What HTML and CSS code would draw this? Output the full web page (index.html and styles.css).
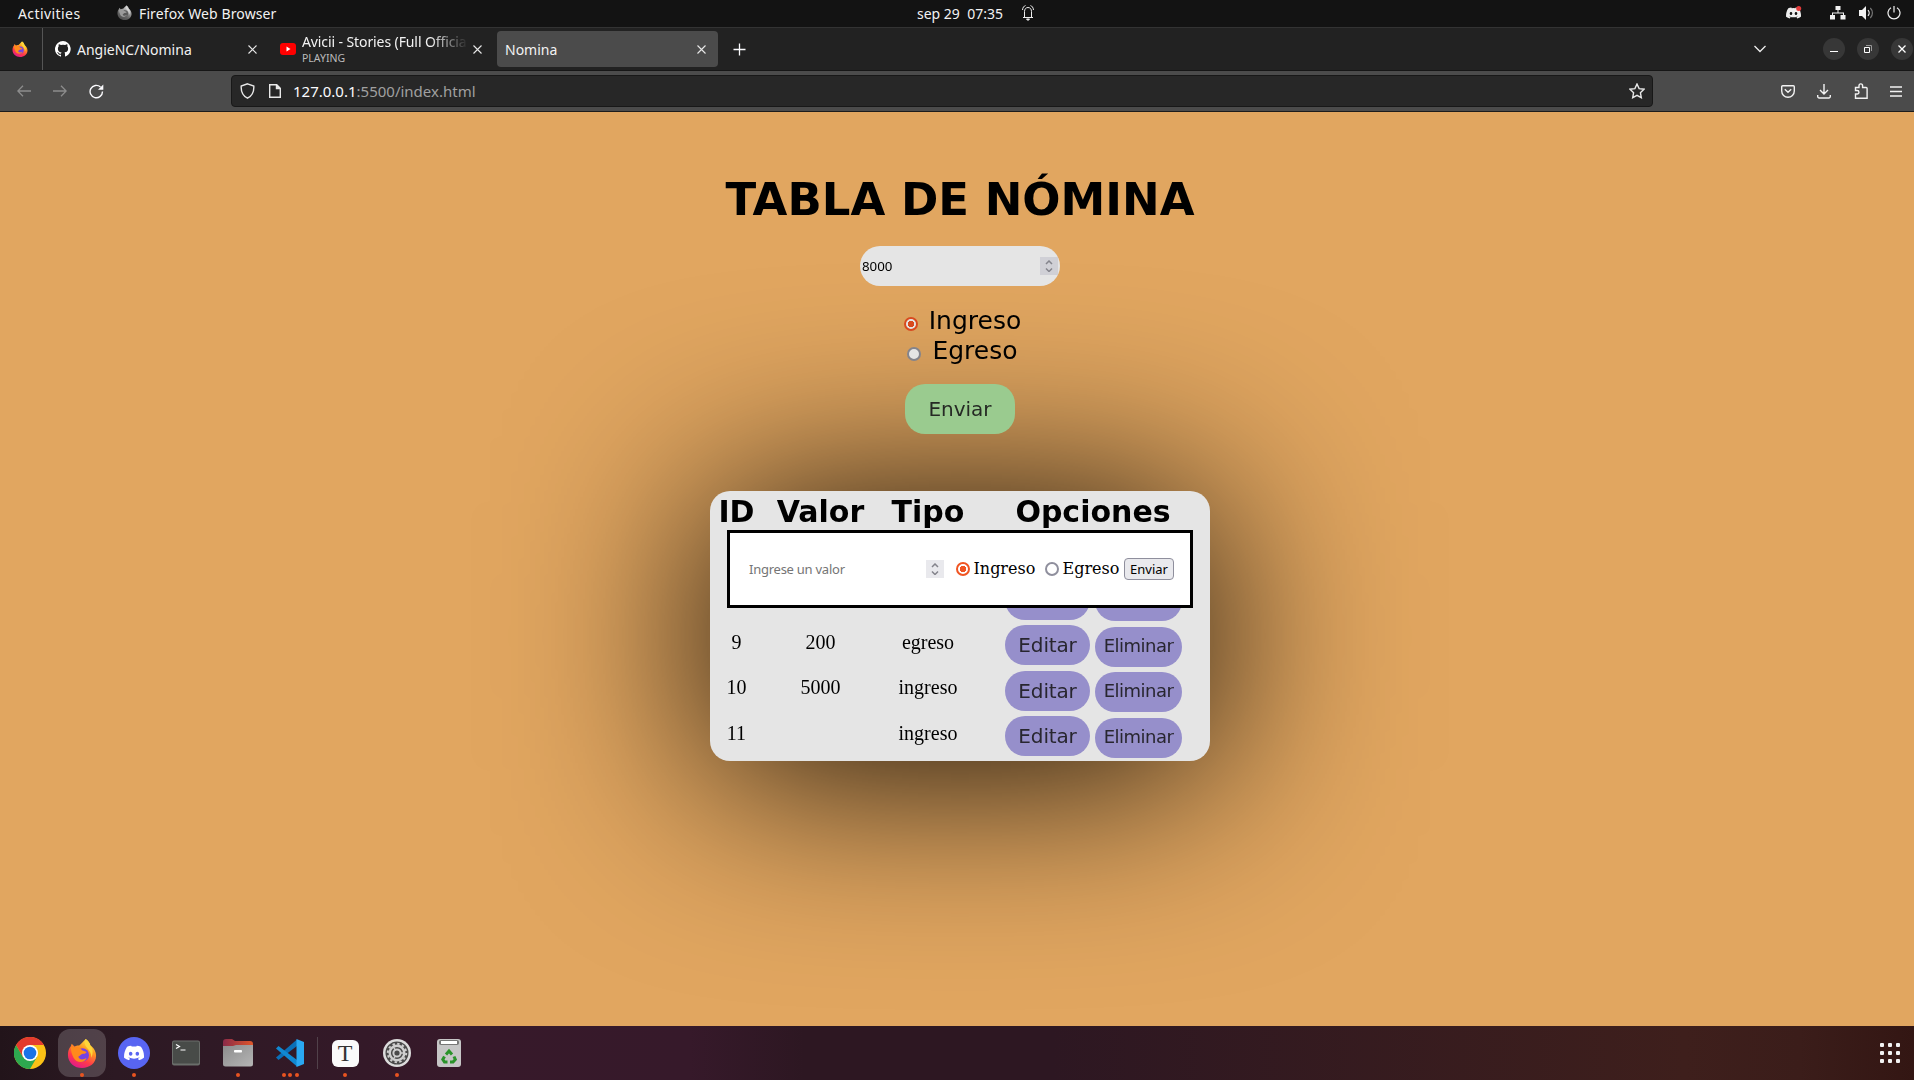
FILE: index.html
```html
<!DOCTYPE html>
<html lang="es">
<head>
<meta charset="utf-8">
<title>Nomina</title>
<link rel="stylesheet" href="styles.css">
</head>
<body>
<svg class="defs" width="0" height="0">
  <defs>
    <linearGradient id="fox" x1=".8" y1="0" x2=".3" y2="1"><stop offset="0" stop-color="#fff44f"/><stop offset=".35" stop-color="#ff9a1f"/><stop offset=".7" stop-color="#ff3a4a"/><stop offset="1" stop-color="#e0188c"/></linearGradient>
    <linearGradient id="fold" x1="0" x2="1"><stop offset="0" stop-color="#8a2a48"/><stop offset="1" stop-color="#e0562a"/></linearGradient>
    <linearGradient id="grey" x1="0" y1="0" x2="1" y2="1"><stop offset="0" stop-color="#8c8c8c"/><stop offset="1" stop-color="#b5b5b5"/></linearGradient>
    <symbol id="firefox" viewBox="0 0 32 32">
      <path fill="url(#fox)" d="M20 1c3 2 4 4 5 7 3 2 6 6 6 11 0 8-7 13-15 13S1 26 1 18c0-4 1-7 3-9l1-3 3 3c2-1 4-1 5-1 2-2 4-4 7-7z"/>
      <circle cx="16.500" cy="18" r="7" fill="#7542e5"/>
      <path fill="#ff8a1c" d="M4 9l4 1c3-1 6 0 8 3l5 2c-1 2-3 2-5 2-2 1-2 2-4 3 1 3 5 4 9 1-2 6-11 6-14 0-2-4-3-8-3-12z"/>
      <path fill="#ffd53a" d="M20 1c3 2 4 4 5 7 3 3 3 9 1 13 0-5-2-8-5-11-2-3-3-5-1-9z"/>
    </symbol>
    <symbol id="discord" viewBox="0 0 24 18">
      <path fill-rule="evenodd" d="M20.300 1.500A19 19 0 0 0 15.500 0l-.7 1.300a18 18 0 0 0-5.600 0L8.500 0a19 19 0 0 0-4.800 1.500C.7 6-.2 10.400.1 14.800A19 19 0 0 0 6 17.800l1.300-2-2-1 .5-.4c4 1.800 8.400 1.800 12.400 0l.5.4-2 1 1.300 2a19 19 0 0 0 5.900-3c.5-5.100-.8-9.500-3.600-13.300zM8 12.200c-1.200 0-2.100-1.100-2.100-2.400S6.800 7.400 8 7.400s2.200 1.100 2.100 2.400c0 1.300-.9 2.400-2.100 2.400zm8 0c-1.200 0-2.100-1.100-2.100-2.400s.9-2.400 2.100-2.400 2.200 1.100 2.100 2.400c0 1.300-.9 2.400-2.100 2.400z"/>
    </symbol>
  </defs>
</svg>

<header class="panel">
  <span class="panel-activities">Activities</span>
  <svg class="panel-fox" width="15" height="15"><use href="#firefox"/></svg>
  <span class="panel-app">Firefox Web Browser</span>
  <span class="panel-clock">sep 29&nbsp; 07:35</span>
  <svg class="panel-bell" width="12" height="16" viewBox="0 0 12 16" fill="none" stroke="#eee" stroke-width="1"><path d="M.5 5C.7 2.500 2 1 3.500.5M11.500 5C11.300 2.500 10 1 8.500.5M1 12.500h10M2.500 12V6.500C2.500 4 4 2.500 6 2.500S9.500 4 9.500 6.500V12"/><path d="M4.500 14h3L6 15.500z" fill="#eee"/></svg>
  <div class="tray">
    <svg class="tray-discord" width="16" height="13" viewBox="0 0 16 13"><use href="#discord" y="1" width="15" height="12" fill="#eee"/><circle cx="12.700" cy="2.500" r="2.500" fill="#e33b3b"/></svg>
    <svg class="tray-net" width="16" height="14" viewBox="0 0 16 14" fill="#f2f2f2"><path d="M5.500 0h5v4h-5zM0 9h5v4.500H0zM10.500 9h5v4.500h-5zM7.500 4h1v3h-1zM2 6.500h12V9h-1V7.500H3V9H2z"/></svg>
    <svg class="tray-vol" width="16" height="14" viewBox="0 0 16 14" fill="#f2f2f2"><path d="M0 4h3l4-4v14L3 10H0z"/><path d="M9 4.200a4 4 0 0 1 0 5.600" fill="none" stroke="#f2f2f2" stroke-width="1.200"/><path d="M11.300 2a7 7 0 0 1 0 10" fill="none" stroke="#777" stroke-width="1.200"/></svg>
    <svg class="tray-power" width="14" height="14" viewBox="0 0 14 14" fill="none" stroke="#f2f2f2" stroke-width="1.200"><path d="M4 1.700a6 6 0 1 0 6 0M7 0v6.500"/></svg>
  </div>
</header>

<nav class="tabs">
  <div class="tab-pinned"><svg width="16" height="16"><use href="#firefox"/></svg></div>
  <div class="tab tab-git">
    <svg width="16" height="16" viewBox="0 0 16 16" fill="#fff"><path d="M8 0a8 8 0 0 0-2.530 15.590c.4.070.550-.17.550-.38v-1.490C3.780 14.200 3.310 12.640 3.310 12.640c-.36-.92-.89-1.170-.89-1.170-.73-.5.050-.49.050-.49.810.060 1.230.830 1.230.830.720 1.230 1.880.870 2.340.670.070-.520.280-.870.510-1.070-1.780-.200-3.640-.890-3.640-3.950 0-.870.310-1.590.820-2.150-.080-.200-.360-1.020.080-2.120 0 0 .670-.210 2.200.820a7.600 7.600 0 0 1 4 0c1.530-1.040 2.200-.820 2.200-.820.440 1.100.160 1.920.080 2.120.510.560.820 1.270.820 2.150 0 3.070-1.870 3.750-3.650 3.950.290.250.540.730.540 1.480v2.190c0 .210.150.460.550.380A8 8 0 0 0 8 0z"/></svg>
    <span class="tab-title">AngieNC/Nomina</span>
    <svg class="x" width="9" height="9" viewBox="0 0 9 9"><path d="M.5.500l8 8M8.500.500l-8 8"/></svg>
  </div>
  <div class="tab tab-video">
    <svg width="16" height="12" viewBox="0 0 16 12"><rect width="16" height="12" rx="3" fill="#f00"/><path d="M6.500 3.600v4.800l4-2.400z" fill="#fff"/></svg>
    <div class="tab-lines"><span class="tab-fade">Avicii - Stories (Full Officia</span><span class="tab-state">PLAYING</span></div>
    <svg class="x" width="9" height="9" viewBox="0 0 9 9"><path d="M.5.500l8 8M8.500.500l-8 8"/></svg>
  </div>
  <div class="tab tab-active">
    <span class="tab-title">Nomina</span>
    <svg class="x" width="9" height="9" viewBox="0 0 9 9"><path d="M.5.500l8 8M8.500.500l-8 8"/></svg>
  </div>
  <svg class="tab-new" width="13" height="13" viewBox="0 0 13 13" stroke="#fbfbfe" stroke-width="1.300"><path d="M6.500.5v12M.5 6.500h12"/></svg>
  <div class="win">
    <svg class="win-list" width="12" height="8" viewBox="0 0 12 8" fill="none" stroke="#eee" stroke-width="1.300"><path d="M.5 1L6 6.500 11.500 1"/></svg>
    <span class="win-btn"><svg width="10" height="10" viewBox="0 0 10 10"><path d="M1 7.500h8" stroke="#fff"/></svg></span>
    <span class="win-btn"><svg width="10" height="10" viewBox="0 0 10 10" fill="none"><path d="M3 1.500h5.500V7" stroke="#999"/><path d="M1.500 3.500h5v5h-5z" stroke="#fff"/></svg></span>
    <span class="win-btn"><svg width="10" height="10" viewBox="0 0 10 10"><path d="M1.500 1.500l7 7M8.500 1.500l-7 7" stroke="#fff" stroke-width="1.300"/></svg></span>
  </div>
</nav>

<div class="toolbar">
  <svg class="nav-back" width="14" height="12" viewBox="0 0 14 12"><path d="M14 6H1M6 .8L.8 6 6 11.200"/></svg>
  <svg class="nav-fwd" width="14" height="12" viewBox="0 0 14 12"><path d="M0 6h13M8 .8L13.200 6 8 11.200"/></svg>
  <svg class="nav-reload" width="15" height="15" viewBox="0 0 15 15"><path d="M13.500 7.500A6.200 6.200 0 1 1 11.500 3" fill="none" stroke="#fbfbfe" stroke-width="1.400"/><path d="M14.300.5v5.300H9z" fill="#fbfbfe"/></svg>
  <div class="url">
    <svg class="url-shield" width="15" height="16" viewBox="0 0 15 16"><path d="M7.500.8L13.800 3c.3 5-1 9.500-6.300 12.200C2.200 12.500.9 8 1.200 3z"/></svg>
    <svg class="url-doc" width="12" height="14" viewBox="0 0 12 14"><path d="M1.500.7h6l3.800 3.800v8.800H.7V.7z"/><path d="M7.500.7v3.800h3.800z" fill="#ddd"/></svg>
    <span class="url-text"><b>127.0.0.1</b>:5500/index.html</span>
    <svg class="url-star" width="16" height="16" viewBox="0 0 16 16"><path d="M8 1l2.100 4.600 4.900.6-3.600 3.500.9 5L8 12.300 3.700 14.700l.9-5L1 6.200l4.900-.6z"/></svg>
  </div>
  <div class="tools">
    <svg width="14" height="13" viewBox="0 0 14 13"><path d="M1.700.7h10.600a1 1 0 0 1 1 1V6A6.300 6.300 0 0 1 .7 6V1.700a1 1 0 0 1 1-1zM3.800 4.300L7 7.300l3.200-3"/></svg>
    <svg width="14" height="15" viewBox="0 0 14 15"><path d="M7 0v10M3 6l4 4 4-4M.7 11v1.500a1.500 1.500 0 0 0 1.500 1.500h9.600a1.500 1.500 0 0 0 1.500-1.500V11"/></svg>
    <svg width="14" height="16" viewBox="0 0 14 16"><path d="M1.500 15.200V11h1.700a1.500 1.500 0 0 0 0-3.500H1.500V4.500H5V2.700a1.800 1.800 0 0 1 3.600 0v1.800h3.500a1 1 0 0 1 1 1v9.700z"/></svg>
    <svg width="12" height="11" viewBox="0 0 12 11"><path d="M0 1h12M0 5.500h12M0 10h12"/></svg>
  </div>
</div>

<main class="page">
  <h1>TABLA DE NÓMINA</h1>
  <div class="amount"><span class="amount-value">8000</span><span class="spin"><svg width="8" height="12" viewBox="0 0 8 12"><path d="M1 4l3-3 3 3M1 8.500l3 3 3-3"/></svg></span></div>
  <div class="choices">
    <div class="choice"><i class="radio on"></i><span class="choice-in">Ingreso</span></div>
    <div class="choice"><i class="radio"></i><span class="choice-out">Egreso</span></div>
  </div>
  <div class="send">Enviar</div>
  <section class="card">
    <div class="row head"><span>ID</span><span>Valor</span><span>Tipo</span><span>Opciones</span></div>
    <div class="rows">
      <div class="row"><span>8</span><span>100</span><span>ingreso</span><span class="ops"><b class="edit">Editar</b><b class="del">Eliminar</b></span></div>
      <div class="row"><span>9</span><span>200</span><span>egreso</span><span class="ops"><b class="edit">Editar</b><b class="del">Eliminar</b></span></div>
      <div class="row"><span>10</span><span>5000</span><span>ingreso</span><span class="ops"><b class="edit">Editar</b><b class="del">Eliminar</b></span></div>
      <div class="row"><span>11</span><span></span><span>ingreso</span><span class="ops"><b class="edit">Editar</b><b class="del">Eliminar</b></span></div>
    </div>
    <div class="dialog">
      <span class="dialog-hint">Ingrese un valor</span>
      <span class="spin"><svg width="8" height="12" viewBox="0 0 8 12"><path d="M1 4l3-3 3 3M1 8.500l3 3 3-3"/></svg></span>
      <i class="radio on"></i><span class="dialog-in">Ingreso</span>
      <i class="radio"></i><span class="dialog-out">Egreso</span>
      <span class="dialog-send">Enviar</span>
    </div>
  </section>
</main>

<footer class="dock">
  <div class="app"><svg width="32" height="32" viewBox="0 0 32 32"><circle cx="16" cy="16" r="16" fill="#fbc116"/><path d="M2.100 8A16 16 0 0 0 16 32l7-12L9 20z" fill="#2da94f"/><path d="M2.100 8L9 20l7-12h13.900A16 16 0 0 0 2.100 8z" fill="#e33b2e"/><circle cx="16" cy="16" r="8" fill="#fff"/><circle cx="16" cy="16" r="6.300" fill="#1a73e8"/></svg></div>
  <div class="app current"><svg width="30" height="30"><use href="#firefox"/></svg><span class="dots"><i></i></span></div>
  <div class="app"><svg width="32" height="32" viewBox="0 0 32 32"><circle cx="16" cy="16" r="16" fill="#5865f2"/><use href="#discord" x="6" y="8.500" width="20" height="15" fill="#fff"/></svg><span class="dots"><i></i></span></div>
  <div class="app"><svg width="28" height="26" viewBox="0 0 28 26"><rect width="28" height="25" y=".5" rx="2" fill="#6a6e6a"/><rect x="1" y="1.500" width="26" height="22" rx="1" fill="#484b48"/><path d="M4 4.500L7.500 6.500 4 8.500M8.500 10h5" fill="none" stroke="#fff" stroke-width="1.200"/></svg></div>
  <div class="app"><svg width="30" height="28" viewBox="0 0 30 28"><path d="M0 3a3 3 0 0 1 3-3h6l3 2h15a3 3 0 0 1 3 3v8H0z" fill="url(#fold)"/><path d="M0 7h10l3-1h17v19a2.500 2.500 0 0 1-2.500 2.500h-25A2.500 2.500 0 0 1 0 25z" fill="url(#grey)"/><rect x="11" y="11" width="8" height="2.500" rx=".8" fill="#fff"/></svg><span class="dots"><i></i></span></div>
  <div class="app"><svg width="28" height="28" viewBox="0 0 28 28"><path d="M0 18.500l2.500 2.500L21 7V.500z" fill="#0a6fb8"/><path d="M0 9.500l2.500-2.500L21 21v6.500z" fill="#1088d2"/><path d="M20.500 0L28 3v22l-7.500 3z" fill="#2aa8f2"/></svg><span class="dots"><i></i><i></i><i></i></span></div>
  <div class="dock-sep"></div>
  <div class="app"><span class="typora">T</span><span class="dots"><i></i></span></div>
  <div class="app"><svg width="28" height="28" viewBox="0 0 28 28"><circle cx="14" cy="14" r="14" fill="#dcdcdc"/><circle cx="14" cy="14" r="11.500" fill="#4a4a4a"/><circle cx="14" cy="14" r="9.200" fill="none" stroke="#cfcfcf" stroke-width="2" stroke-dasharray="2.400 2.410"/><circle cx="14" cy="14" r="7.300" fill="none" stroke="#cfcfcf" stroke-width="2.400"/><circle cx="14" cy="14" r="3.600" fill="none" stroke="#cfcfcf" stroke-width="2"/><path d="M17 14h4M12.500 16.600L10.500 20M12.500 11.400L10.500 8" stroke="#cfcfcf" stroke-width="1.300"/></svg><span class="dots"><i></i></span></div>
  <div class="app"><svg width="24" height="28" viewBox="0 0 24 28"><rect width="24" height="28" rx="3" fill="#c6c6c6"/><rect x="2" y="1" width="20" height="5" rx="2" fill="#777"/><path d="M4 2h16v3H4z" fill="#fff"/><g fill="none" stroke="#2a932a" stroke-width="3"><path d="M9 15.500l3-3.500 3 3.500M17 17.500l1.300 3-2.300 2.500h-3M10.500 23H7.500L5.800 20.500 7.500 17.500"/></g></svg></div>
  <div class="grid-btn"><i></i><i></i><i></i><i></i><i></i><i></i><i></i><i></i><i></i></div>
</footer>
</body>
</html>
```
FILE: styles.css
```css
* { box-sizing: border-box; }
body { margin: 0; width: 1914px; height: 1080px; overflow: hidden; display: flex; flex-direction: column; font: 14px/1 "Noto Sans", sans-serif; color: #f2f2f2; }
svg { display: block; flex: none; }
span { white-space: nowrap; }
b { font-weight: normal; }
.defs { position: absolute; }

/* desktop panel */
.panel { height: 28px; flex: none; display: flex; align-items: center; padding: 0 13px 2px 18px; background: #131313; border-bottom: 1px solid #333; }
.panel-activities, .panel-app, .panel-clock { padding-top: 2px; }
.panel-activities { width: 99px; letter-spacing: .42px; }
.panel-fox { filter: grayscale(1); }
.panel-app { width: 785px; padding-left: 7px; letter-spacing: .11px; }
.panel-clock { width: 105px; }
.tray { margin-left: auto; display: flex; align-items: center; }
.tray-net { margin-left: 28px; }
.tray-vol { margin-left: 13px; }
.tray-power { margin-left: 12px; }

/* tab strip */
.tabs { height: 43px; flex: none; display: flex; align-items: center; background: #222; border-bottom: 1px solid #161616; }
.tab-pinned { width: 43px; height: 42px; display: flex; align-items: center; padding-left: 12px; border-right: 1px solid #555; }
.tab { display: flex; align-items: center; height: 36px; border-radius: 4px; }
.tab-git { width: 225px; padding: 0 11px 0 12px; }
.tab-title { padding: 2px 0 0 6px; }
.x { margin-left: auto; fill: none; stroke: #e8e8e8; stroke-width: 1.1; }
.tab-video { width: 226px; padding: 0 12px 0 12px; }
.tab-lines { width: 168px; margin: -1px 0 0 6px; display: flex; flex-direction: column; overflow: hidden; }
.tab-fade { line-height: 18px; letter-spacing: -.1px; -webkit-mask-image: linear-gradient(90deg, #000 76%, transparent 99%); mask-image: linear-gradient(90deg, #000 76%, transparent 99%); }
.tab-state { font-size: 10.500px; line-height: 14px; color: #bbb; }
.tab-active { width: 221px; margin-left: 3px; padding: 0 12px 0 2px; background: #4b4b4b; }
.tab-new { margin-left: 15px; }
.win { margin-left: auto; display: flex; align-items: center; gap: 12px; padding-right: 1px; }
.win-list { margin-right: 45px; }
.win-btn { width: 22px; height: 22px; border-radius: 50%; background: #373737; display: grid; place-items: center; }

/* navigation toolbar */
.toolbar { height: 41px; flex: none; display: flex; align-items: center; padding: 0 12px 0 17px; background: #4b4b4b; border-bottom: 1px solid #1c1c1c; }
.nav-back, .nav-fwd { fill: none; stroke: #8d8d8d; stroke-width: 1.3; }
.nav-fwd { margin-left: 22px; }
.nav-reload { margin-left: 22px; }
.url { width: 1422px; height: 32px; margin-left: 127px; padding: 0 7px 0 8px; display: flex; align-items: center; background: #272727; border: 1px solid #181818; border-radius: 4px; }
.url svg { fill: none; stroke: #e8e8e8; stroke-width: 1.4; }
.url-doc { margin-left: 14px; }
.url-text { margin-left: 12px; padding-top: 1px; font-size: 15px; color: #a0a0a0; }
.url-text b { color: #fbfbfe; }
.url-star { margin-left: auto; }
.tools { margin-left: auto; display: flex; align-items: center; gap: 22.400px; }
.tools svg { fill: none; stroke: #f2f2f2; stroke-width: 1.4; }

/* web page */
.page { position: relative; z-index: 0; height: 914px; flex: none; width: 1920px; display: flex; flex-direction: column; align-items: center; background: #e1a660; color: #000; overflow: hidden; }
h1 { margin: 62px 0 0; height: 72px; font: bold 45px/52px "DejaVu Sans", sans-serif; }
.amount { width: 200px; height: 40px; flex: none; padding: 0 2px; display: flex; align-items: center; justify-content: space-between; border-radius: 20px; background: #e5e5e5; font-size: 13.300px; }
.amount-value { padding-top: 2px; }
.spin { width: 18px; height: 18px; display: grid; place-items: center; background: #d0d0d6; }
.spin svg { fill: none; stroke: #84848c; stroke-width: 1.5; }
.choices { margin-top: 20px; padding-left: 5px; font: 25px/30px "DejaVu Sans", sans-serif; display: flex; flex-direction: column; align-items: center; }
.choice { height: 30px; display: flex; align-items: center; gap: 11px; }
.choice .radio { margin-top: 5px; }
.radio { width: 14px; height: 14px; flex: none; border-radius: 50%; border: 2px solid #84848c; background: #e5e5e5; }
.radio.on { border-color: #d84a20; background: radial-gradient(circle, #d84a20 0 3px, #e5e5e5 3.500px); }
.send { width: 110px; height: 50px; flex: none; margin-top: 18px; border-radius: 20px; background: #9acb8f; color: #262a25; font: 20px/50px "DejaVu Sans", sans-serif; text-align: center; }
.card { position: relative; width: 500px; height: 270px; flex: none; margin-top: 57px; border-radius: 20px; background: #e5e5e5; }
.card::before { content: ""; position: absolute; z-index: -1; left: 0; top: 10px; width: 500px; height: 270px; border-radius: 20px; background: rgba(0,0,0,.95); filter: blur(100px); will-change: transform, filter; }
.row { height: 45.500px; display: grid; grid-template-columns: 53px 115px 100px 232px; text-align: center; font: 20px/41.500px "Liberation Serif", serif; }
.head { height: 39px; font: bold 30px/42px "DejaVu Sans", sans-serif; }
.head span:last-child { padding-right: 2px; }
.rows { height: 228px; overflow: hidden; display: flex; flex-direction: column; justify-content: flex-end; }
.ops { display: flex; gap: 5px; padding: 3.500px 0 0 27px; font-family: "DejaVu Sans", sans-serif; color: #28262f; }
.ops b { height: 40px; border-radius: 20px; background: #968fcb; line-height: 40px; }
.ops .edit { width: 85px; letter-spacing: -.15px; }
.ops .del { width: 87px; margin-top: 1.900px; font-size: 18px; letter-spacing: -.5px; line-height: 38.500px; }
.dialog { position: absolute; left: 17px; top: 39px; width: 466px; height: 78px; border: 3px solid #000; background: #fff; display: flex; align-items: center; padding-left: 19px; font-size: 13px; }
.dialog .spin { background: #e9e9ed; }
.dialog-hint { width: 177px; color: #757575; letter-spacing: -.25px; }
.dialog .radio { margin-left: 12px; background: #fff; border-color: #8f8f9d; }
.dialog .radio.on { border-color: #f05523; background: radial-gradient(circle, #f05523 0 3px, #fff 3.500px); }
.dialog-in, .dialog-out { font: 16px/20px "DejaVu Serif", serif; padding-left: 3.500px; }
.dialog-in { width: 65px; }
.dialog-out { width: 60px; }
.dialog .dialog-in + .radio { margin-left: 10px; }
.dialog-send { width: 50px; height: 22px; margin-left: 5px; border: 1px solid #8f8f9d; border-radius: 4px; background: #e9e9ed; line-height: 20px; text-align: center; }

/* dock */
.dock { height: 54px; flex: none; display: flex; align-items: center; padding: 0 14px 0 4px; background: linear-gradient(90deg, #22141a, #2c1923 6%, #37192a 24%, #36192a 36%, #2d1722 42%, #2d1722 55%, #3e1f1c 88%, #3b1d1a 94%, #331613); }
.app { position: relative; width: 52px; height: 54px; display: grid; place-items: center; }
.current::before { content: ""; position: absolute; left: 2px; top: 3px; width: 48px; height: 48px; border-radius: 12px; background: rgba(255,255,255,.18); }
.current svg { position: relative; }
.dots { position: absolute; left: 0; right: 0; top: 47px; display: flex; justify-content: center; gap: 2.500px; }
.dots i { width: 4px; height: 4px; border-radius: 50%; background: #e95420; }
.dock-sep { width: 1px; height: 32px; margin: 0 1px 0 1px; background: #51414a; }
.typora { width: 27px; height: 27px; border-radius: 6px; background: #fafafa; color: #333; font: 24px/27px "Liberation Serif", serif; text-align: center; }
.grid-btn { margin-left: auto; display: grid; grid-template-columns: repeat(3, 4px); gap: 4px; }
.grid-btn i { width: 4px; height: 4px; border-radius: 1px; background: #f2f2f2; }
```
